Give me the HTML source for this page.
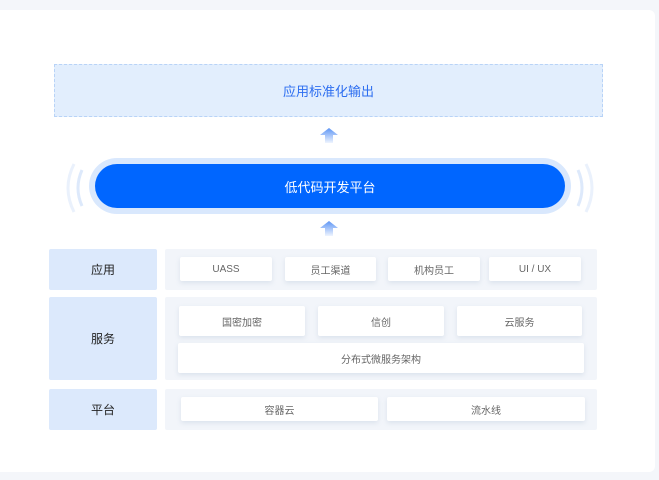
<!DOCTYPE html>
<html><head><meta charset="utf-8"><style>
*{margin:0;padding:0;box-sizing:border-box}
body{width:659px;height:480px;background:#f4f6fa;font-family:"Liberation Sans","Noto Sans CJK SC",sans-serif;position:relative;overflow:hidden}
.card{position:absolute;left:-6px;top:10px;width:661px;height:462px;background:#fff;border-radius:6px}
.a{position:absolute}
.top{left:54px;top:64px;width:549px;height:53px;background:#e2eefd;border:1px dashed #b8d3f7;color:#2d6ef0;font-size:13px;display:flex;align-items:center;justify-content:center}
.halo{left:89px;top:158px;width:482px;height:56px;border-radius:28px;background:#d9e8fd}
.pill{left:95px;top:164px;width:470px;height:44px;border-radius:22px;background:#0066ff;color:#fff;font-size:13px;display:flex;align-items:center;justify-content:center}
.lab{left:49px;width:108px;background:#dce9fc;color:#222;font-size:12px;display:flex;align-items:center;justify-content:center;border-radius:2px}
.pan{left:165px;width:432px;background:#f2f5fa;border-radius:2px}
.it{background:#fff;color:#666;font-size:10px;display:flex;align-items:center;justify-content:center;box-shadow:0 2px 5px rgba(150,170,200,.25);border-radius:2px}
</style></head><body>
<div class="card"></div>
<div class="a top">应用标准化输出</div>
<svg class="a" style="left:319px;top:127px" width="20" height="17"><defs><linearGradient id="g" x1="0" y1="0" x2="0" y2="1"><stop offset="0" stop-color="#5d95f5"/><stop offset="1" stop-color="#5d95f5" stop-opacity="0.1"/></linearGradient></defs><path d="M10 1 L19 8 L14 8 L14 16 L6 16 L6 8 L1 8Z" fill="url(#g)"/></svg>
<svg class="a" style="left:319px;top:220px" width="20" height="17"><path d="M10 1 L19 8 L14 8 L14 16 L6 16 L6 8 L1 8Z" fill="url(#g)"/></svg>
<svg class="a" style="left:60px;top:158px" width="540" height="60" fill="none">
<path d="M14 6 Q2 30 14 54" stroke="#eaf1fc" stroke-width="3"/>
<path d="M22 12 Q14 30 22 48" stroke="#dde9fb" stroke-width="3"/>
<path d="M526 6 Q538 30 526 54" stroke="#eaf1fc" stroke-width="3"/>
<path d="M518 12 Q526 30 518 48" stroke="#dde9fb" stroke-width="3"/>
</svg>
<div class="a halo"></div>
<div class="a pill">低代码开发平台</div>

<div class="a lab" style="top:249px;height:41px">应用</div>
<div class="a pan" style="top:249px;height:41px"></div>
<div class="a it" style="left:180px;top:257px;width:92px;height:24px">UASS</div>
<div class="a it" style="left:285px;top:257px;width:91px;height:24px">员工渠道</div>
<div class="a it" style="left:388px;top:257px;width:92px;height:24px">机构员工</div>
<div class="a it" style="left:489px;top:257px;width:92px;height:24px">UI / UX</div>

<div class="a lab" style="top:297px;height:83px">服务</div>
<div class="a pan" style="top:297px;height:83px"></div>
<div class="a it" style="left:179px;top:306px;width:126px;height:30px">国密加密</div>
<div class="a it" style="left:318px;top:306px;width:126px;height:30px">信创</div>
<div class="a it" style="left:457px;top:306px;width:125px;height:30px">云服务</div>
<div class="a it" style="left:178px;top:343px;width:406px;height:30px">分布式微服务架构</div>

<div class="a lab" style="top:389px;height:41px">平台</div>
<div class="a pan" style="top:389px;height:41px"></div>
<div class="a it" style="left:181px;top:397px;width:197px;height:24px">容器云</div>
<div class="a it" style="left:387px;top:397px;width:198px;height:24px">流水线</div>
</body></html>
